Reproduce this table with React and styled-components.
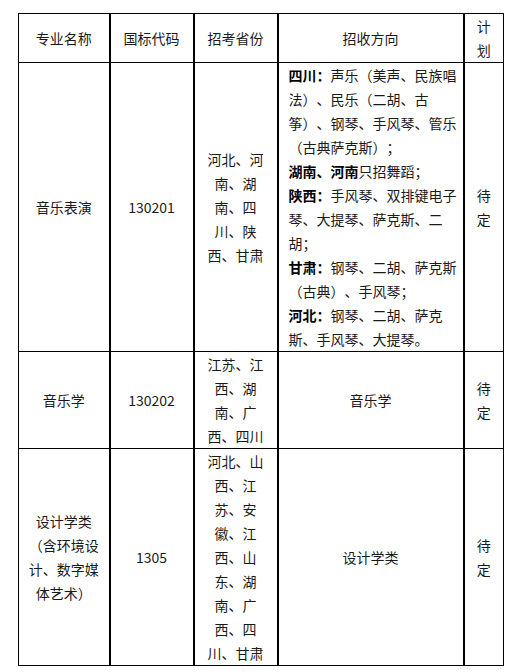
import React from 'react';
import styled, { createGlobalStyle } from 'styled-components';

const GlobalStyle = createGlobalStyle`
  body {
    margin: 0;
    background: #fff;
    font-family: "Noto Sans CJK SC", "Liberation Sans", sans-serif;
  }
`;

const Page = styled.div`
  padding: 13px 0 0 18px;
`;

const Table = styled.table`
  width: 485px;
  table-layout: fixed;
  border-collapse: collapse;
  font-size: 14px;
  line-height: 24px;
  color: #1a1a1a;
  text-spacing-trim: space-all;
`;

const Cell = styled.td`
  border: 1px solid #000;
  border-right-width: ${props => (props.last ? '1px' : '2px')};
  padding: 0 ${props => props.pad || 7}px;
  text-align: ${props => (props.left ? 'left' : 'center')};
  vertical-align: middle;
  word-break: break-all;
`;

const Head = styled(Cell).attrs({ as: 'th' })`
  font-weight: normal;
`;

const Region = styled.b`
  font-weight: bold;
  color: #000;
`;

const columns = [91, 84, 84, 186, 40];

const rows = [
  {
    name: '音乐学',
    code: '130202',
    provinces: '江苏、江西、湖南、广西、四川',
    direction: '音乐学',
  },
  {
    name: '设计学类（含环境设计、数字媒体艺术）',
    code: '1305',
    provinces: '河北、山西、江苏、安徽、江西、山东、湖南、广西、四川、甘肃',
    direction: '设计学类',
  },
];

export default function App() {
  return (
    <Page>
      <GlobalStyle />
      <Table>
        <colgroup>
          {columns.map((w, i) => (
            <col key={i} style={{ width: w }} />
          ))}
        </colgroup>
        <thead>
          <tr>
            <Head>专业名称</Head>
            <Head>国标代码</Head>
            <Head>招考省份</Head>
            <Head>招收方向</Head>
            <Head last pad={11}>计划</Head>
          </tr>
        </thead>
        <tbody>
          <tr>
            <Cell>音乐表演</Cell>
            <Cell>130201</Cell>
            <Cell>河北、河南、湖南、四川、陕西、甘肃</Cell>
            <Cell left pad={10} style={{ paddingRight: 2 }}>
              <Region>四川：</Region>声乐（美声、民族唱<br />
              法）、民乐（二胡、古<br />
              筝）、钢琴、手风琴、管乐<br />
              （古典萨克斯）；<br />
              <Region>湖南、河南</Region>只招舞蹈；<br />
              <Region>陕西：</Region>手风琴、双排键电子<br />
              琴、大提琴、萨克斯、二<br />
              胡；<br />
              <Region>甘肃：</Region>钢琴、二胡、萨克斯<br />
              （古典）、手风琴；<br />
              <Region>河北：</Region>钢琴、二胡、萨克<br />
              斯、手风琴、大提琴。
            </Cell>
            <Cell last pad={11}>待定</Cell>
          </tr>
          {rows.map(row => (
            <tr key={row.code}>
              <Cell>{row.name}</Cell>
              <Cell>{row.code}</Cell>
              <Cell>{row.provinces}</Cell>
              <Cell>{row.direction}</Cell>
              <Cell last pad={11}>待定</Cell>
            </tr>
          ))}
        </tbody>
      </Table>
    </Page>
  );
}
